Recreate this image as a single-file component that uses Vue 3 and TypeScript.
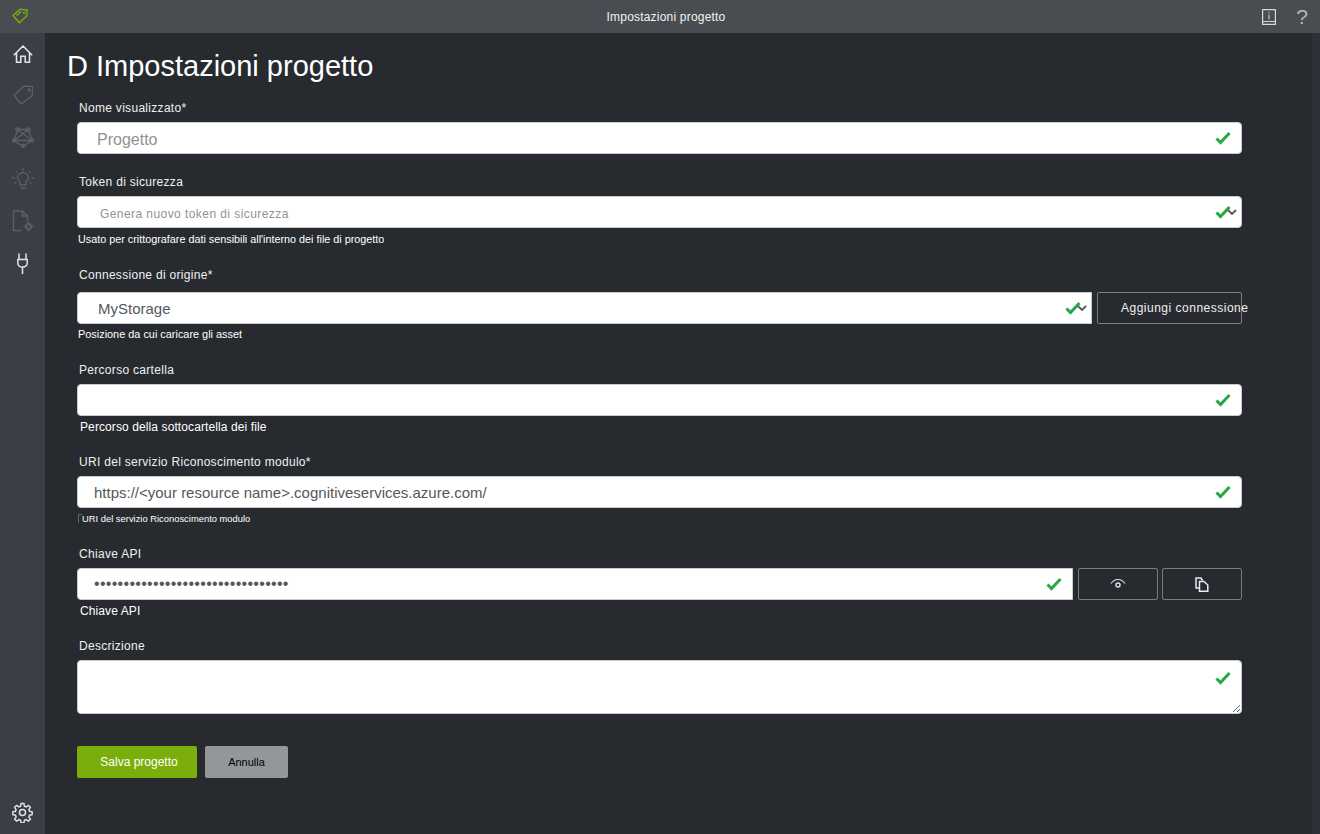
<script setup lang="ts">
const keyValue = 'x'.repeat(33);
</script>

<template>
  <div class="app">
    <header class="titlebar">
      <svg class="titlebar__logo" width="18" height="18" viewBox="0 0 18 18" fill="none" stroke="#7cb305" stroke-width="1.300">
        <path d="M1 8.500 8 2.200l7.300.800-.600 6-7.400 6.700z" />
        <path d="M4.500 8.500 9 4.500" />
        <circle cx="12.300" cy="5.700" r="1.100" stroke-width="1" />
      </svg>
      <span class="titlebar__title">Impostazioni progetto</span>
      <div class="titlebar__actions">
        <svg width="14" height="16" viewBox="0 0 14 16" fill="none" stroke="#d6d9dc" stroke-width="1.200">
          <path d="M.600.600h12.800v14.800H.600zM.600 12.500h12.800" />
          <path d="M7 3v1.300M7 5.500v5" stroke="#b9c4cc" />
        </svg>
        <span class="titlebar__help">?</span>
      </div>
    </header>

    <div class="body">
      <nav class="sidebar">
        <div class="sidebar__top">
          <a class="sidebar__item sidebar__item--home sidebar__item--active">
            <svg width="20" height="18" viewBox="0 0 20 18" fill="none" stroke="currentColor" stroke-width="1.500">
              <path d="M.800 10.300 10 1l9.200 9.300M3.500 8v9.300h4.300v-6h4.400v6h4.300V8" />
            </svg>
          </a>
          <a class="sidebar__item">
            <svg width="20" height="20" viewBox="0 0 20 20" fill="none" stroke="currentColor" stroke-width="1.300">
              <path d="M1 10 11.300 1l8.400.700-.700 9.300-11 8z" />
              <circle cx="16" cy="5" r="1" />
            </svg>
          </a>
          <a class="sidebar__item">
            <svg width="22" height="21" viewBox="0 0 22 21" fill="none" stroke="currentColor" stroke-width="1.300">
              <path d="M5.500 2.500h11l3.500 11-9 6-9-6z" />
              <path d="M5.500 2.500 20 13.500M16.500 2.500 2 13.500M2 13.500h18" />
              <circle cx="5.500" cy="2.500" r="1.700" />
              <circle cx="16.500" cy="2.500" r="1.700" />
              <circle cx="2" cy="13.500" r="1.500" />
              <circle cx="20" cy="13.500" r="1.500" />
              <circle cx="11" cy="19" r="1.500" />
            </svg>
          </a>
          <a class="sidebar__item">
            <svg width="22" height="22" viewBox="0 0 22 22" fill="none" stroke="currentColor" stroke-width="1.300">
              <path d="M8 17v-3C6.500 13 5.500 11.500 5.500 10a5.500 5.500 0 0 1 11 0c0 1.500-1 3-2.500 4v3zM8.500 20h5" />
              <path d="M11 0v2.500M3.500 3 5 4.500M18.500 3 17 4.500M0 10h2.500M19.500 10H22M2.500 15.500 4.500 14M19.500 15.500 17.500 14" />
            </svg>
          </a>
          <a class="sidebar__item">
            <svg width="22" height="22" viewBox="0 0 22 22" fill="none" stroke="currentColor" stroke-width="1.300">
              <path d="M10 20.500H1.500V1h9l5 5v5M10.500 1v5h5" />
              <circle cx="16.500" cy="16.500" r="2.500" stroke-width="2" />
              <path d="M16.500 11.500v2M16.500 19.500v2M11.500 16.500h2M19.500 16.500h2" stroke-width="1.600" />
            </svg>
          </a>
          <a class="sidebar__item sidebar__item--active">
            <svg width="11" height="21" viewBox="0 0 11 21" fill="none" stroke="currentColor" stroke-width="1.500">
              <path d="M2 .500v6M9 .500v6M.800 6.500h9.400V10c0 2.500-1.500 4-4.700 4S.800 12.500.800 10zM5.500 14v7" />
            </svg>
          </a>
        </div>
        <a class="sidebar__item sidebar__item--active sidebar__item--gear">
          <svg width="21" height="21" viewBox="0 0 24 24" fill="none" stroke="currentColor" stroke-width="1.700">
            <circle cx="12" cy="12" r="3.500" />
            <path d="M10.300 1.500h3.400l.6 3.200 2 .8 2.700-1.800 2.400 2.400-1.800 2.700.8 2 3.100.6v3.400l-3.100.6-.8 2 1.800 2.700-2.400 2.400-2.700-1.800-2 .8-.6 3.100h-3.400l-.6-3.100-2-.8-2.700 1.800-2.400-2.400 1.800-2.700-.8-2-3.100-.6v-3.400l3.100-.6.800-2-1.800-2.700 2.400-2.400 2.700 1.800 2-.8z" transform="translate(0 -.2) scale(.96) translate(.5 .5)" />
          </svg>
        </a>
      </nav>

      <main class="content">
        <h1 class="page-title">D Impostazioni progetto</h1>

        <form class="form" @submit.prevent>
          <div class="field">
            <label class="field__label">Nome visualizzato*</label>
            <div class="control">
              <input class="input input--name" type="text" placeholder="Progetto" />
              <svg class="check" width="16" height="14" viewBox="0 0 16 14"><path d="M1.500 7.500 5.500 11.500 14.500 2" /></svg>
            </div>
          </div>

          <div class="field">
            <label class="field__label">Token di sicurezza</label>
            <div class="control">
              <input class="input input--token" type="text" placeholder="Genera nuovo token di sicurezza" />
              <svg class="check" width="16" height="14" viewBox="0 0 16 14"><path d="M1.500 7.500 5.500 11.500 14.500 2" /></svg>
              <svg class="chevron" width="10" height="6" viewBox="0 0 10 6"><path d="M1 1 5 5 9 1" /></svg>
            </div>
            <p class="field__hint field__hint--token">Usato per crittografare dati sensibili all'interno dei file di progetto</p>
          </div>

          <div class="field">
            <label class="field__label field__label--wide">Connessione di origine*</label>
            <div class="row">
              <div class="control control--grow">
                <input class="input input--storage" type="text" value="MyStorage" />
                <svg class="check" width="16" height="14" viewBox="0 0 16 14"><path d="M1.500 7.500 5.500 11.500 14.500 2" /></svg>
                <svg class="chevron" width="10" height="6" viewBox="0 0 10 6"><path d="M1 1 5 5 9 1" /></svg>
              </div>
              <button type="button" class="btn-outline btn-outline--add">Aggiungi connessione</button>
            </div>
            <p class="field__hint field__hint--tight">Posizione da cui caricare gli asset</p>
          </div>

          <div class="field">
            <label class="field__label">Percorso cartella</label>
            <div class="control">
              <input class="input" type="text" />
              <svg class="check" width="16" height="14" viewBox="0 0 16 14"><path d="M1.500 7.500 5.500 11.500 14.500 2" /></svg>
            </div>
            <p class="field__hint">Percorso della sottocartella dei file</p>
          </div>

          <div class="field">
            <label class="field__label">URI del servizio Riconoscimento modulo*</label>
            <div class="control">
              <input class="input input--uri" type="text" value="https://<your resource name>.cognitiveservices.azure.com/" />
              <svg class="check" width="16" height="14" viewBox="0 0 16 14"><path d="M1.500 7.500 5.500 11.500 14.500 2" /></svg>
            </div>
            <p class="field__hint field__hint--uri">URI del servizio Riconoscimento modulo</p>
          </div>

          <div class="field">
            <label class="field__label">Chiave API</label>
            <div class="row">
              <div class="control control--grow">
                <input class="input input--key" type="password" :value="keyValue" />
                <svg class="check" width="16" height="14" viewBox="0 0 16 14"><path d="M1.500 7.500 5.500 11.500 14.500 2" /></svg>
              </div>
              <button type="button" class="btn-outline btn-outline--icon">
                <svg width="16" height="12" viewBox="0 0 16 12" fill="none" stroke="#d9e2ea" stroke-width="1.200">
                  <path d="M1 5.500C3 2.700 5.300 1.500 8 1.500s5 1.200 7 4" />
                  <circle cx="8" cy="7" r="2" stroke-width="1.400" />
                </svg>
              </button>
              <button type="button" class="btn-outline btn-outline--icon btn-outline--snug">
                <svg width="14" height="15" viewBox="0 0 14 15" fill="none" stroke="#e6ecf2" stroke-width="1.500">
                  <path d="M4.500 11H1V1h5l1.500 2.500" />
                  <path d="M4.500 4.500h4.500l3.800 3.500v6.200H4.500z" />
                </svg>
              </button>
            </div>
            <p class="field__hint">Chiave API</p>
          </div>

          <div class="field field--last">
            <label class="field__label">Descrizione</label>
            <div class="control control--area">
              <textarea class="input input--area"></textarea>
              <svg class="check" width="16" height="14" viewBox="0 0 16 14"><path d="M1.500 7.500 5.500 11.500 14.500 2" /></svg>
            </div>
          </div>

          <div class="actions">
            <button type="submit" class="btn btn--save">Salva progetto</button>
            <button type="button" class="btn btn--cancel">Annulla</button>
          </div>
        </form>
      </main>

      <div class="scrollbar"></div>
    </div>
  </div>
</template>

<style>
html,
body {
  margin: 0;
  background: #272b30;
}
</style>

<style scoped>
.app {
  height: 834px;
  display: flex;
  flex-direction: column;
  overflow: hidden;
  font-family: "Liberation Sans", Arial, sans-serif;
  color: #fff;
  background: #272b30;
}

.titlebar {
  height: 33px;
  flex: none;
  display: flex;
  align-items: center;
  justify-content: center;
  padding-left: 12px;
  position: relative;
  background: #494d52;
}

.titlebar__logo {
  position: absolute;
  left: 12px;
  top: 7px;
}

.titlebar__title {
  font-size: 12px;
  letter-spacing: 0.2px;
  color: #f2f2f2;
}

.titlebar__actions {
  position: absolute;
  right: 12px;
  top: 0;
  height: 33px;
  display: flex;
  align-items: center;
  gap: 20px;
}

.titlebar__help {
  font-size: 21px;
  color: #b4b7ba;
}

.body {
  flex: 1;
  display: flex;
  min-height: 0;
}

.sidebar {
  width: 45px;
  flex: none;
  display: flex;
  flex-direction: column;
  justify-content: space-between;
  background: #3b3f45;
}

.sidebar__item {
  height: 42px;
  display: flex;
  align-items: center;
  justify-content: center;
  color: #5c6065;
}

.sidebar__item--home {
  box-sizing: border-box;
  height: 41px;
  padding-top: 1px;
}

.sidebar__item--active {
  color: #dfe5ea;
}

.sidebar__item--gear {
  margin-bottom: 1px;
}

.content {
  flex: 1;
  min-width: 0;
  padding: 0 70px 0 22px;
}

.page-title {
  margin: 15px 0 0;
  height: 36px;
  font-size: 29px;
  line-height: 36px;
  font-weight: 400;
  color: #fff;
}

.form {
  margin: 14px 0 0 10px;
}

.field {
  margin-bottom: 18px;
}

.field--last {
  margin-bottom: 32px;
}

.field__label {
  display: block;
  height: 18px;
  margin: 0 0 6px 2px;
  font-size: 12px;
  line-height: 20px;
  letter-spacing: 0.3px;
  color: #f0f0f0;
}

.field__label--wide {
  margin-bottom: 9px;
}

.field__hint {
  margin: 0 0 0 3px;
  height: 18px;
  font-size: 12px;
  line-height: 22px;
  letter-spacing: 0.1px;
  color: #fff;
}

.field__hint--token {
  margin-left: 1px;
  height: 19px;
  font-size: 10.800px;
  line-height: 23px;
  letter-spacing: 0;
}

.field__hint--tight {
  margin-left: 1px;
  font-size: 10.900px;
  line-height: 20px;
  letter-spacing: 0;
}

.field__hint--uri {
  position: relative;
  margin-left: 1px;
  padding-left: 4px;
  font-size: 9.400px;
  line-height: 22px;
  letter-spacing: 0;
}

.field__hint--uri::before {
  content: "";
  position: absolute;
  left: 0;
  top: 6px;
  width: 3px;
  height: 8px;
  border-left: 1px solid #5b6b70;
  border-top: 1px solid #5b6b70;
}

.row {
  display: flex;
  gap: 5px;
}

.control {
  position: relative;
  height: 32px;
}

.control--grow {
  flex: 1;
  min-width: 0;
}

.control--area {
  height: 54px;
}

.input {
  display: block;
  box-sizing: border-box;
  width: 100%;
  height: 32px;
  padding: 0 40px 0 17px;
  border: 1px solid #ccc;
  border-radius: 4px;
  outline: none;
  background: #fff;
  font-family: inherit;
  font-size: 14px;
  color: #54585c;
}

.control--grow .input {
  border-radius: 4px 0 0 4px;
}

.input::placeholder {
  color: #8f9295;
  opacity: 1;
}

.input--name {
  padding-left: 19px;
  padding-top: 3px;
  font-size: 16px;
}

.input--token {
  padding-left: 22px;
  padding-top: 3px;
  font-size: 12px;
  letter-spacing: 0.43px;
}

.input--storage {
  padding-left: 20px;
  font-size: 15px;
}

.input--uri {
  padding-left: 16px;
  font-size: 15px;
}

.input--key {
  padding-left: 16px;
  font-size: 16px;
  letter-spacing: 0.3px;
}

.input--area {
  height: 54px;
  padding-top: 6px;
  resize: vertical;
}

.check {
  position: absolute;
  right: 11px;
  top: 9px;
  fill: none;
  stroke: #28a745;
  stroke-width: 3;
}

.control--area .check {
  top: 11px;
}

.chevron {
  position: absolute;
  right: 5px;
  top: 13px;
  fill: none;
  stroke: #54585c;
  stroke-width: 1.800;
}

.btn-outline {
  flex: none;
  box-sizing: border-box;
  height: 32px;
  border: 1px solid #7a7d80;
  border-radius: 2px;
  background: transparent;
  color: #f0f0f0;
  font-family: inherit;
  display: flex;
  align-items: center;
  justify-content: center;
}

.btn-outline--add {
  width: 145px;
  padding: 0 0 0 23px;
  justify-content: flex-start;
  font-size: 12px;
  letter-spacing: 0.5px;
  white-space: nowrap;
}

.btn-outline--icon {
  width: 80px;
  padding: 0;
}

.btn-outline--snug {
  margin-left: -1px;
}

.actions {
  display: flex;
  gap: 8px;
}

.btn {
  height: 32px;
  border: none;
  border-radius: 2px;
  font-family: inherit;
  font-size: 12px;
}

.btn--save {
  width: 120px;
  padding: 0 0 0 4px;
  background: #7cae0b;
  color: #fff;
}

.btn--cancel {
  width: 83px;
  padding: 0;
  font-size: 11px;
  background: #93979a;
  color: #000;
}

.scrollbar {
  width: 8px;
  flex: none;
  background: #2e3238;
}
</style>
